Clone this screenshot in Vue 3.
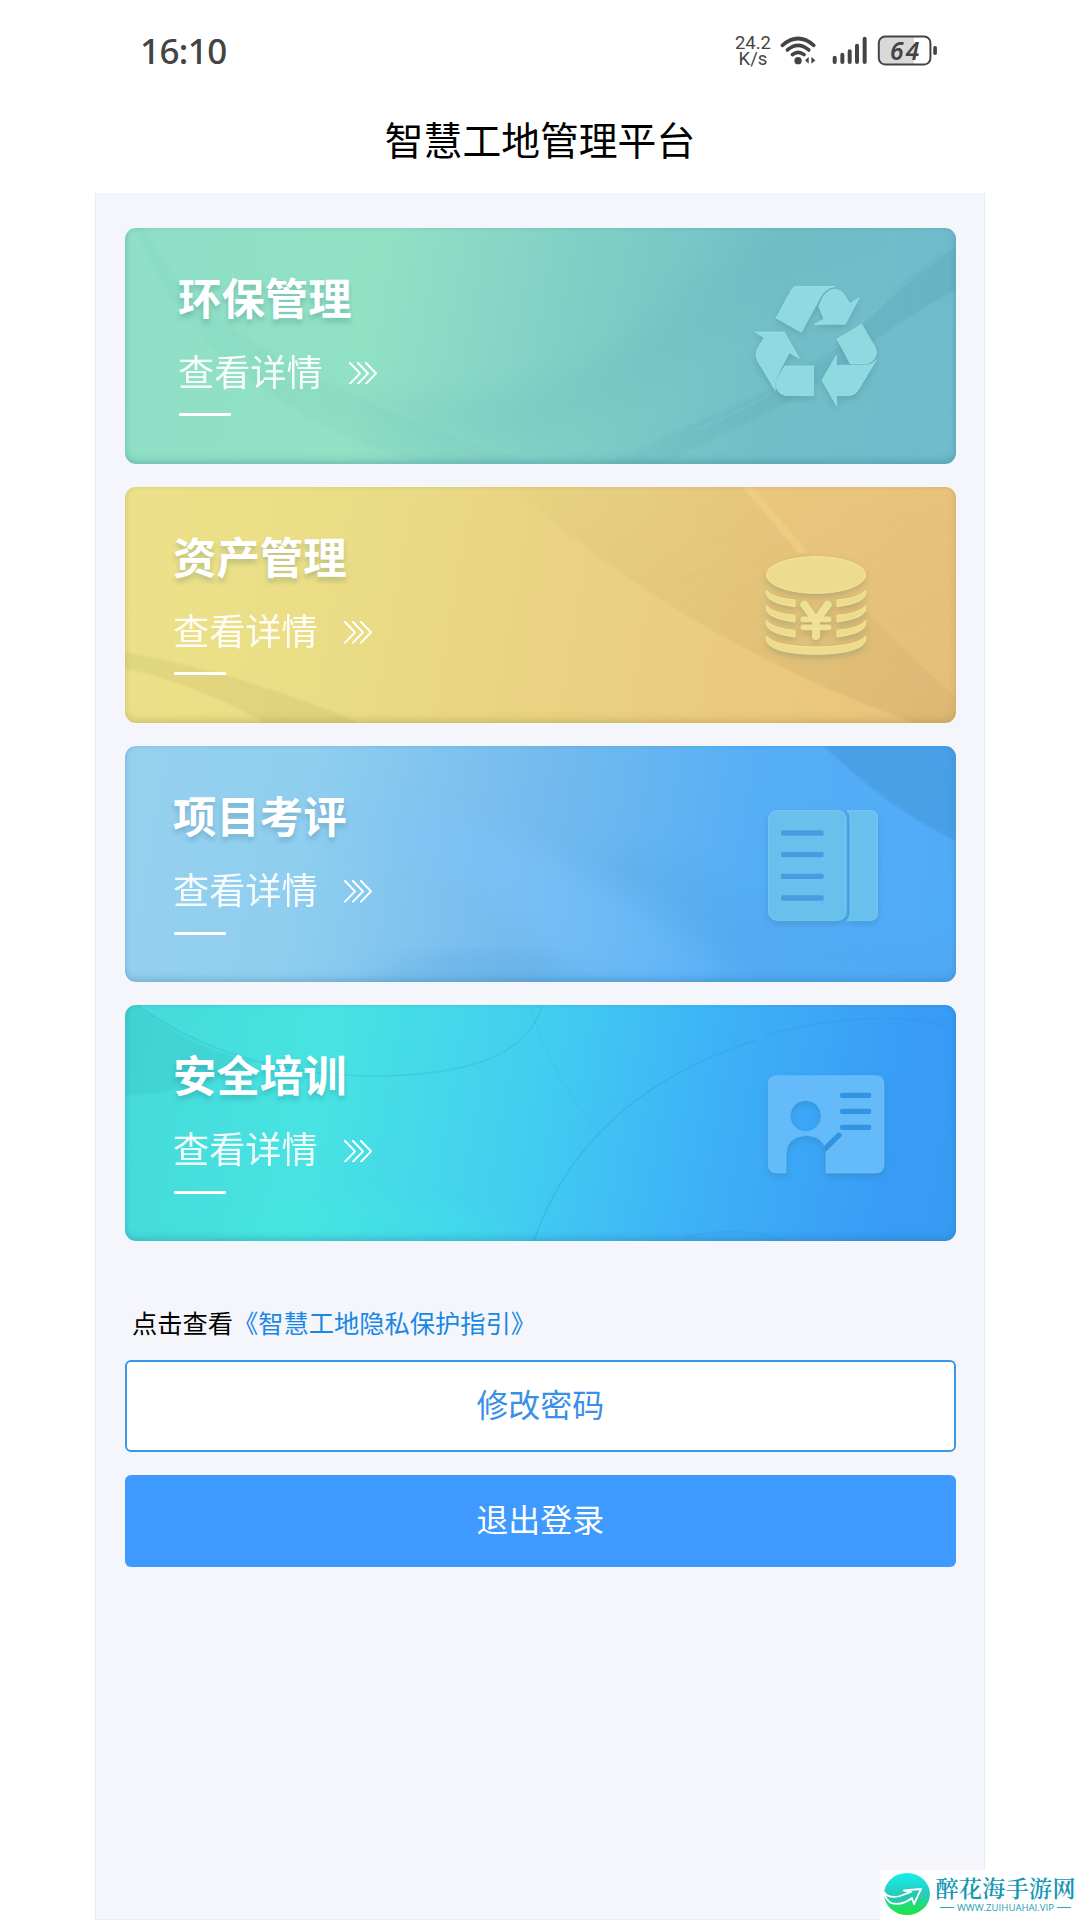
<template>
  <div class="screen">
    <header class="status-bar">
      <span class="clock">16:10</span>
      <div class="status-right">
        <div class="speed">
          <span>24.2</span>
          <span>K/s</span>
        </div>
        <svg class="status-icons" viewBox="240 40 480 100">
          <g fill="none" stroke="#444" stroke-width="11" stroke-linecap="round">
            <path d="M247 77Q294 36 341 77" />
            <path d="M262 91Q294 63 326 91" />
            <path d="M277 105Q294 91 312 105" />
          </g>
          <circle cx="294" cy="123" r="11" fill="#444" />
          <path d="M326 112v20l-11-10zM334 112v20l12-10z" fill="#444" />
          <g stroke="#444" stroke-width="12" stroke-linecap="round">
            <path d="M404 114v13M427 105v22M449 95v32M471 78v49M494 57v70" />
          </g>
          <path d="M553 52H642V133H553Q538 133 538 118V67Q538 52 553 52" fill="#d9d9d9" />
          <rect x="536.500" y="50.500" width="155" height="84" rx="19" fill="none" stroke="#444" stroke-width="6" />
          <rect x="700" y="79" width="11" height="27" rx="5" fill="#444" />
          <text x="614" y="121" text-anchor="middle" textLength="88" class="battery-text">64</text>
        </svg>
      </div>
    </header>

    <h1 class="page-title">智慧工地管理平台</h1>

    <main class="panel">
      <div class="card-list">
        <section v-for="card in cards" :key="card.id" :class="['card', card.id]">
          <!-- background decoration -->
          <svg class="card-bg" viewBox="0 0 831 236" preserveAspectRatio="none">
            <defs>
              <filter id="soft" x="-20%" y="-20%" width="140%" height="140%">
                <feGaussianBlur stdDeviation="12" />
              </filter>
              <filter id="slight" x="-10%" y="-10%" width="120%" height="120%">
                <feGaussianBlur stdDeviation="1" />
              </filter>
              <linearGradient id="fadeDown" x1="0" y1="0" x2="1" y2="1">
                <stop offset="0" stop-color="#a08a50" stop-opacity="0.02" />
                <stop offset="1" stop-color="#b08a50" stop-opacity="0.2" />
              </linearGradient>
              <linearGradient id="beam" x1="0" y1="0" x2="1" y2="0">
                <stop offset="0" stop-color="#7cc4ff" stop-opacity="0" />
                <stop offset="0.5" stop-color="#7cc4ff" stop-opacity="0.45" />
                <stop offset="1" stop-color="#6bbcff" stop-opacity="0.2" />
              </linearGradient>
              <linearGradient id="fadeRight" x1="0" y1="0" x2="1" y2="0">
                <stop offset="0" stop-color="#4f98ac" stop-opacity="0.06" />
                <stop offset="1" stop-color="#4f98ac" stop-opacity="0.26" />
              </linearGradient>
            </defs>
            <g v-if="card.id === 'eco'">
              <path d="M10 0H18Q60 75 130 115Q300 210 420 236H300Q130 190 40 60Z" fill="#5fb5ae" opacity="0.07" filter="url(#slight)" />
              <path d="M200 160Q330 230 420 205Q530 170 600 100Q650 40 760 0H640Q560 50 500 110Q400 190 200 160Z" fill="#58a9b2" opacity="0.1" filter="url(#soft)" />
              <path d="M480 236Q580 190 640 165Q720 120 770 65Q800 35 831 18V62Q760 100 720 138Q670 175 590 210L540 236Z" fill="url(#fadeRight)" filter="url(#slight)" />
              <path d="M570 202Q640 175 700 130Q760 70 831 18" fill="none" stroke="#8fd0d6" stroke-width="1.500" opacity="0.25" />
            </g>
            <g v-else-if="card.id === 'asset'">
              <path d="M0 165Q130 190 235 236H140Q80 200 0 181Z" fill="#b8ad60" opacity="0.2" filter="url(#slight)" />
              <path d="M390 0Q440 50 540 115Q660 190 790 236H831V0Z" fill="url(#fadeDown)" filter="url(#slight)" />
              <path d="M627 0Q710 100 831 210V0Z" fill="#efc780" opacity="0.45" filter="url(#slight)" />
              <path d="M618 0H628L684 66H674Z" fill="#f2d088" opacity="0.7" filter="url(#slight)" />
            </g>
            <g v-else-if="card.id === 'review'">
              <path d="M180 50Q330 60 430 110Q560 170 620 236H440Q400 140 200 80Z" fill="url(#beam)" filter="url(#soft)" />
              <path d="M440 110Q530 150 600 236H831V200Q640 190 560 110Z" fill="#4c9bdc" opacity="0.14" filter="url(#soft)" />
              <path d="M700 0Q760 60 831 95V0Z" fill="#3d8bc8" opacity="0.36" filter="url(#slight)" />
              <path d="M230 236Q350 180 490 236Z" fill="#3b91d1" opacity="0.2" filter="url(#soft)" />
            </g>
            <g v-else>
              <path d="M0 0H12Q60 40 130 57Q60 90 0 90Z" fill="#35b4b8" opacity="0.22" filter="url(#slight)" />
              <path d="M12 0Q110 70 250 71Q400 70 417 0" fill="none" stroke="#2dbcd3" stroke-width="1.500" opacity="0.4" />
              <path d="M409 236Q460 90 632 35" fill="none" stroke="#239fc9" stroke-width="1.300" opacity="0.4" />
              <path d="M405 0Q425 70 480 134" fill="none" stroke="#239fc9" stroke-width="1.300" opacity="0.12" />
              <path d="M90 225Q180 185 300 198Q360 205 400 236H80Z" fill="#41efe0" opacity="0.2" filter="url(#soft)" />
              <path d="M560 232Q620 220 660 236M640 30Q760 0 831 24" fill="none" stroke="#2b91d8" stroke-width="1.500" opacity="0.2" />
            </g>
          </svg>

          <div class="card-text">
            <h2>{{ card.title }}</h2>
            <a class="detail" @click="active = card.id">
              <span>查看详情</span>
              <svg class="arrows" viewBox="0 0 84 68">
                <path d="M3 3L33 34L3 65M27 3L57 34L27 65M51 3L81 34L51 65" />
              </svg>
            </a>
            <i class="underline"></i>
          </div>

          <svg v-if="card.id === 'eco'" class="card-icon" viewBox="630 203 420 400">
            <path d="M765 213H884Q858 219 843 243L784 351L708 308L749 233Q755 218 765 213Z" />
            <path d="M836 273L850 243Q865 222 887 222Q908 226 916 243L929 264L958 247L916 327H823L852 311Z" />
            <path d="M891 371L965 327L1005 395Q1014 414 1003 431Q992 446 970 446H931Z" />
            <path d="M846 495L889 420V450H970Q997 450 1010 433L954 525Q946 539 928 541H890V572Z" />
            <path d="M645 350H733L778 429L748 412Q735 435 710 486Q703 504 706 525L654 439Q644 421 650 405L672 367Z" />
            <path d="M734 452H821V541H738Q715 537 709 516Q707 500 714 486Z" />
          </svg>

          <svg v-else-if="card.id === 'asset'" class="card-icon" viewBox="630 200 420 400">
            <ellipse cx="828" cy="296" rx="149" ry="55" />
            <path v-for="y in [342, 388, 433]" :key="y" :d="`M679 ${y}Q700 ${y + 24} 765 ${y + 29}V${y + 49}Q680 ${y + 38} 679 ${y + 8}ZM977 ${y}Q957 ${y + 24} 891 ${y + 29}V${y + 49}Q976 ${y + 38} 977 ${y + 8}Z`" />
            <path d="M679 479Q700 510 828 512Q955 510 977 479V492Q965 532 828 534Q691 532 679 492Z" />
            <path class="yen" d="M793 385L828 434L863 385M828 434V479" />
            <path class="yen" d="M790 429H866M790 453H866" />
          </svg>

          <svg v-else-if="card.id === 'review'" class="card-icon" viewBox="630 196 420 400">
            <path d="M921 222H991Q1012 222 1012 243V530Q1012 551 991 551H921Q931 546 931 530V243Q931 228 921 222Z" />
            <rect x="686" y="222" width="232" height="329" rx="25" />
            <g class="slots">
              <rect v-for="y in [281, 346, 411, 476]" :key="y" x="723" :y="y" width="128" height="16" rx="5" />
            </g>
          </svg>

          <svg v-else class="card-icon" viewBox="630 196 420 400">
            <path fill-rule="evenodd" d="M710 240H1007Q1032 240 1032 265V507Q1032 532 1007 532H858V467Q850 421 798 419Q738 424 738 478V532H710Q685 532 685 507V265Q685 240 710 240ZM797 314A47 47 0 1 0 797 408A47 47 0 1 0 797 314Z" />
            <g class="slots">
              <rect v-for="y in [291, 339, 387]" :key="y" x="900" :y="y" width="94" height="16" rx="7" />
              <path d="M851 452L893 411Q904 408 906 420L857 469Z" />
            </g>
          </svg>
        </section>
      </div>

      <p class="privacy">点击查看<a>《智慧工地隐私保护指引》</a></p>
      <button class="btn btn-outline">修改密码</button>
      <button class="btn btn-primary">退出登录</button>
    </main>

    <svg class="watermark" viewBox="0 0 200 50">
      <defs>
        <linearGradient id="logo" x1="0" y1="0" x2="0" y2="1">
          <stop offset="0" stop-color="#12eeee" />
          <stop offset="0.5" stop-color="#2bcbbb" />
          <stop offset="1" stop-color="#1ee63c" />
        </linearGradient>
      </defs>
      <rect width="200" height="50" fill="#fff" />
      <ellipse cx="27" cy="24" rx="23" ry="21" fill="url(#logo)" />
      <path d="M4 22Q8 29 20 26L31 22L24 20.500L41 19L34 34L32 28Q22 36 11 33Q5 29 4 22Z" fill="#25c9b0" stroke="#fff" stroke-width="1.800" stroke-linejoin="round" />
      <text x="55.500" y="27" textLength="140" class="mark-name">醉花海手游网</text>
      <path d="M60 37.500H74M177 37.500H191" stroke="#2fa5b8" stroke-width="1" />
      <text x="77" y="40.500" textLength="97" lengthAdjust="spacingAndGlyphs" class="mark-url">WWW.ZUIHUAHAI.VIP</text>
    </svg>
  </div>
</template>

<script setup>
import { ref } from 'vue';

const active = ref('');

const cards = [
  { id: 'eco', title: '环保管理' },
  { id: 'asset', title: '资产管理' },
  { id: 'review', title: '项目考评' },
  { id: 'training', title: '安全培训' },
];
</script>

<style>
body { margin: 0; background: #fff; }
</style>

<style scoped>
.screen { position: relative; box-sizing: border-box; width: 1080px; height: 1920px; padding: 0 95px; display: flex; flex-direction: column; overflow: hidden; background: #fff; font-family: "Noto Sans", "Noto Sans CJK SC", sans-serif; }

.status-bar { height: 100px; flex: none; padding: 0 45px; display: flex; justify-content: space-between; box-sizing: border-box; }
.clock { margin-top: 26px; height: 50px; line-height: 50px; font-family: "Noto Sans", sans-serif; font-size: 35px; font-weight: 500; letter-spacing: -0.6px; color: #444; }
.status-right { display: flex; align-items: flex-start; padding-top: 33px; }
.speed { display: flex; flex-direction: column; align-items: center; margin-right: 9px; font-family: Roboto, sans-serif; font-size: 18.500px; line-height: 16px; color: #444; padding-top: 2px; }
.status-icons { width: 160px; height: 33.3px; }
.battery-text { font-family: "Noto Sans", sans-serif; font-size: 74px; font-weight: 600; font-style: italic; fill: #444; }

.page-title { flex: none; margin: 0; height: 92.5px; line-height: 77px; text-align: center; font-family: "Noto Sans CJK SC", sans-serif; font-size: 38.8px; font-weight: 400; color: #000; }

.panel { flex: 1; box-sizing: border-box; padding: 35px 28.500px 0 29px; border: 1px solid #e0edfb; border-top: none; background: #f4f6fb; font-family: "Noto Sans CJK SC", sans-serif; }
.card-list { display: flex; flex-direction: column; gap: 23.3px; }

.card { position: relative; height: 236px; display: flex; border-radius: 11px; overflow: hidden; }
.card::after { content: ""; position: absolute; inset: 0; border-radius: 11px; box-shadow: inset 0 -4px 7px rgba(30, 90, 120, .18), inset 0 0 4px rgba(30, 90, 120, .12); }
.eco { background: linear-gradient(100deg, #8edfc6 0%, #91e1c5 30%, #80cfc6 53%, #72bfc7 76%, #6fbacc 100%); }
.asset { background: linear-gradient(100deg, #ece18a 0%, #eadd86 25%, #e9d382 50%, #ebca7e 76%, #e9c27c 100%); }
.asset::after { box-shadow: inset 0 -4px 7px rgba(130, 120, 30, .2), inset 0 0 4px rgba(130, 120, 30, .13); }
.review { background: linear-gradient(100deg, #97d0ef 0%, #8fceef 22%, #74bbee 48%, #56aef5 74%, #50abf8 100%); }
.training { background: linear-gradient(100deg, #45dada 0%, #48e3e2 24%, #41ccf1 50%, #3eb0f7 70%, #389bf6 92%, #389bf2 100%); }
.card-bg { position: absolute; inset: 0; width: 100%; height: 100%; }

.card-text { position: relative; width: 576px; padding: 40px 0 0 48px; box-sizing: border-box; color: #fff; }
.eco .card-text { padding-left: 53px; }
.card-text h2 { margin: 0; height: 60px; line-height: 56px; font-size: 43.4px; font-weight: 700; text-shadow: 0 4px 5px rgba(20, 80, 90, .22); }
.detail { display: flex; align-items: center; height: 54px; margin-top: 17px; cursor: pointer; }
.detail span { height: 54px; line-height: 50px; font-size: 36.2px; font-weight: 400; opacity: .92; }
.arrows { width: 28px; height: 22.7px; margin: 3px 0 0 26px; }
.arrows path { fill: none; stroke: #fff; stroke-width: 6; stroke-linecap: round; stroke-linejoin: round; }
.underline { display: block; width: 52px; height: 3px; margin: 14.500px 0 0 1px; background: #fff; border-radius: 1px; }

.card-icon { position: relative; flex: none; width: 140px; height: 133.3px; margin: 55.8px 0 0 49px; overflow: visible; fill: #8fdae1; filter: drop-shadow(0 3px 3px rgba(30, 90, 110, .22)); }
.eco .card-icon { stroke: #9ee4e8; stroke-width: 2; }
.asset .card-icon { fill: #eddc8e; stroke: #f2e59a; stroke-width: 3; }
.asset .card-icon .yen { fill: none; stroke: #efe093; stroke-width: 24; stroke-linecap: round; stroke-linejoin: round; }
.asset .card-icon .yen + .yen { stroke-width: 17; }
.review .card-icon { fill: #6ac0ed; stroke: #78cdf4; stroke-width: 3; }
.review .slots { fill: #479de0; stroke: none; }
.training .card-icon { fill: #65bbfa; stroke: #73c3fb; stroke-width: 2; }
.training .slots { fill: #3094e0; stroke: none; }

.privacy { margin: 66px 0 0 7px; height: 53px; line-height: 30px; font-size: 25.25px; color: #000; }
.privacy a { color: #1b87e5; }

.btn { display: block; width: 100%; height: 92px; box-sizing: border-box; padding: 0 0 7px; border-radius: 6px; font-family: inherit; font-size: 31.9px; font-weight: 400; cursor: pointer; }
.btn-outline { border: 2px solid #3a97e8; background: #fff; color: #3a8fe8; }
.btn-primary { margin-top: 23px; border: none; background: #3e9aff; color: #fff; }

.watermark { position: absolute; right: 0; bottom: 0; width: 200px; height: 50px; }
.mark-name { font-family: "Noto Serif CJK SC", "Noto Sans CJK SC", serif; font-size: 23px; font-weight: 600; fill: #1496b4; }
.mark-url { font-family: "Open Sans", sans-serif; font-size: 9px; fill: #1f9db5; }
</style>
